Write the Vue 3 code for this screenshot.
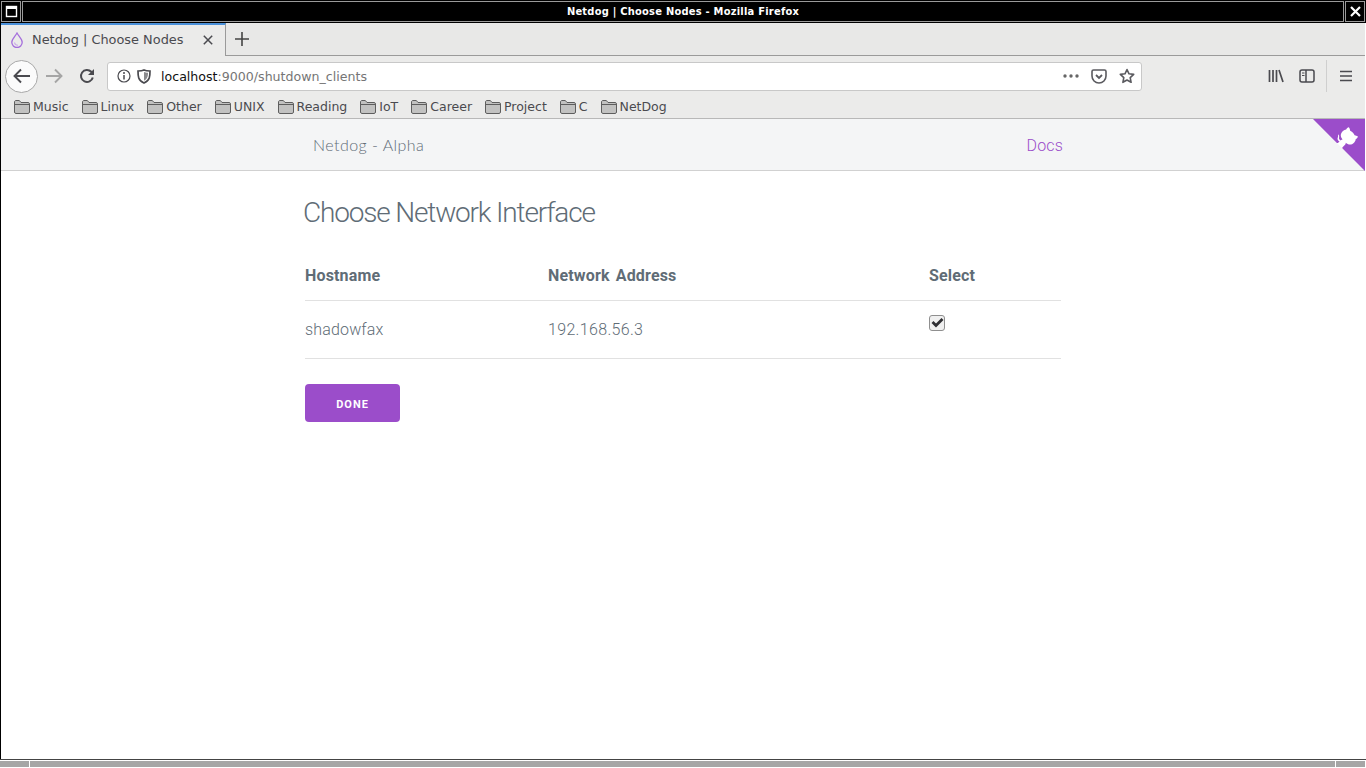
<template>
  <div class="window">
    <div class="titlebar">
      <div class="win-btn">
        <svg width="13" height="13" viewBox="0 0 13 13"><rect x="1.5" y="1.5" width="10" height="10" fill="none" stroke="#fff" stroke-width="1.4" /><rect x="1" y="1" width="11" height="3" fill="#fff" /></svg>
      </div>
      <div class="win-title">Netdog | Choose Nodes - Mozilla Firefox</div>
      <div class="win-btn">
        <svg width="13" height="13" viewBox="0 0 13 13"><path d="M2 2l9 9M11 2l-9 9" stroke="#fff" stroke-width="2.2" /></svg>
      </div>
    </div>

    <div class="browser">
      <div class="tabbar">
        <div class="tab">
          <svg class="tab-icon" width="14" height="16" viewBox="0 0 14 16">
            <path d="M7 1C5 4.500 1.800 7 1.800 10.300A5.200 5.200 0 0 0 12.200 10.300C12.200 7 9 4.500 7 1Z" fill="none" stroke="#a56fdc" stroke-width="1.300" />
            <path d="M4.500 10.500C4.800 12.300 6 13.300 8 13.300" fill="none" stroke="#c9a6ea" stroke-width="1.100" />
          </svg>
          <span class="tab-title">Netdog | Choose Nodes</span>
          <svg class="tab-close" width="10" height="10" viewBox="0 0 10 10"><path d="M.8.800l8.400 8.400M9.200.800L.8 9.200" stroke="#4a4a4f" stroke-width="1.500" /></svg>
        </div>
        <div class="tab-rest">
          <svg width="14" height="14" viewBox="0 0 14 14"><path d="M7 0v14M0 7h14" stroke="#444" stroke-width="1.600" /></svg>
        </div>
      </div>

      <div class="navbar">
        <div class="back">
          <svg width="18" height="16" viewBox="0 0 18 16"><path d="M8 1.500L1.500 8 8 14.500M2 8h15" fill="none" stroke="#4a4a4f" stroke-width="1.900" /></svg>
        </div>
        <svg class="fwd" width="18" height="16" viewBox="0 0 18 16"><path d="M10 1.500L16.500 8 10 14.500M16 8H1" fill="none" stroke="#a5a5a5" stroke-width="1.900" /></svg>
        <svg class="reload" width="16" height="16" viewBox="0 0 16 16"><path d="M13.800 9.500A6 6 0 1 1 12.300 3.800L14 5.500" fill="none" stroke="#4a4a4f" stroke-width="2" /><path d="M15 1v6H9z" fill="#4a4a4f" /></svg>
        <div class="urlbar">
          <svg class="info" width="14" height="14" viewBox="0 0 14 14"><circle cx="7" cy="7" r="6" fill="none" stroke="#4a4a4f" stroke-width="1.200" /><path d="M7 6v4.500" stroke="#4a4a4f" stroke-width="1.500" /><circle cx="7" cy="3.900" r="1" fill="#4a4a4f" /></svg>
          <svg class="shield" width="14" height="15" viewBox="0 0 14 15"><path d="M7 1c2 1 4 1 6 1 0 5 0 9.500-6 12C1 11.500 1 7 1 2c2 0 4 0 6-1Z" fill="none" stroke="#4a4a4f" stroke-width="1.700" /><path d="M7 3c1 .5 2.500.8 4 .8 0 3.500-.5 6-4 8Z" fill="#8a8a8d" /></svg>
          <span class="url"><span class="url-host">localhost</span>:9000/shutdown_clients</span>
          <svg class="dots" width="16" height="4" viewBox="0 0 16 4"><circle cx="2" cy="2" r="1.700" fill="#666" /><circle cx="8" cy="2" r="1.700" fill="#666" /><circle cx="14" cy="2" r="1.700" fill="#666" /></svg>
          <svg class="pocket" width="16" height="15" viewBox="0 0 16 15"><path d="M2.500 1h11c.8 0 1.500.7 1.500 1.500V7a7 7 0 0 1-14 0V2.500C1 1.700 1.700 1 2.500 1Z" fill="none" stroke="#5a5a5f" stroke-width="1.600" /><path d="M5 6l3 3 3-3" fill="none" stroke="#5a5a5f" stroke-width="1.800" /></svg>
          <svg class="star" width="16" height="16" viewBox="0 0 16 16"><path d="M8 1.500l2 4.300 4.700.6-3.500 3.200.9 4.700L8 12l-4.100 2.300.9-4.700L1.300 6.400 6 5.800Z" fill="none" stroke="#5a5a5f" stroke-width="1.600" stroke-linejoin="round" /></svg>
        </div>
        <svg class="library" width="16" height="14" viewBox="0 0 16 14"><path d="M1.500 1v12M5 1v12M8.500 1v12M11 1l4 12" fill="none" stroke="#4a4a4f" stroke-width="1.700" /></svg>
        <svg class="sidebar-icon" width="16" height="14" viewBox="0 0 16 14"><rect x="1" y="1" width="14" height="12" rx="2" fill="none" stroke="#4a4a4f" stroke-width="1.500" /><path d="M7 1v12" stroke="#4a4a4f" stroke-width="1.500" /><path d="M3 4h2.500M3 6.500h2.500" stroke="#4a4a4f" stroke-width="1.200" /></svg>
        <div class="divider"></div>
        <svg class="menu" width="12" height="12" viewBox="0 0 12 12"><path d="M0 1.500h12M0 6h12M0 10.500h12" stroke="#4a4a4f" stroke-width="1.500" /></svg>
      </div>

      <div class="bookmarks">
        <div v-for="b in bookmarks" :key="b" class="bookmark">
          <svg width="16" height="14" viewBox="0 0 16 14"><path d="M.5 12V2c0-.8.6-1.500 1.400-1.500h3.400L7 2.500h7.100c.8 0 1.400.6 1.400 1.400V12c0 .8-.6 1.500-1.400 1.500H1.900C1.100 13.500.5 12.800.5 12Z" fill="#c2c2c1" stroke="#5e5e5e" /><path d="M1 4.500h14" stroke="#5e5e5e" /></svg>
          <span>{{ b }}</span>
        </div>
      </div>

      <div class="page">
        <header class="site-nav">
          <div class="site-nav-inner">
            <span class="brand">Netdog - Alpha</span>
            <a class="docs">Docs</a>
          </div>
          <svg class="corner" width="52" height="52" viewBox="0 0 250 250">
            <path d="M0,0 L115,115 L130,115 L142,142 L250,250 L250,0 Z" fill="#9b4dca" />
            <path d="M128.300,109.000 C113.800,99.700 119.000,89.600 119.000,89.600 C122.000,82.700 120.500,78.600 120.500,78.600 C119.200,72.000 123.400,76.300 123.400,76.300 C127.300,80.900 125.500,87.300 125.500,87.300 C122.900,97.600 130.600,101.900 134.400,103.200" fill="#fff" />
            <path d="M115.000,115.000 C114.900,115.100 118.700,116.500 119.800,115.400 L133.700,101.600 C136.900,99.200 139.900,98.400 142.200,98.600 C133.800,88.000 127.500,74.400 143.800,58.000 C148.500,53.400 154.000,51.200 159.700,51.000 C160.300,49.400 163.200,43.600 171.400,40.100 C171.400,40.100 176.100,42.500 178.800,56.200 C183.100,58.600 187.200,61.800 190.900,65.400 C194.500,69.000 197.700,73.200 200.100,77.600 C213.800,80.200 216.300,84.900 216.300,84.900 C212.700,93.100 206.900,96.000 205.400,96.600 C205.100,102.400 203.000,107.800 198.300,112.500 C181.900,128.900 168.300,122.500 157.700,114.100 C157.900,116.900 156.700,120.900 152.700,124.900 L141.000,136.500 C139.800,137.700 141.600,141.900 141.800,141.800 Z" fill="#fff" />
          </svg>
        </header>

        <main class="content">
          <h3 class="heading">Choose Network Interface</h3>
          <table class="nodes">
            <thead>
              <tr>
                <th class="col-host">Hostname</th>
                <th class="col-addr">Network Address</th>
                <th>Select</th>
              </tr>
            </thead>
            <tbody>
              <tr v-for="n in nodes" :key="n.host">
                <td>{{ n.host }}</td>
                <td class="addr">{{ n.addr }}</td>
                <td class="select-cell">
                  <span class="check">
                    <svg width="13" height="11" viewBox="0 0 13 11"><path d="M1.500 5l3.500 3.500 6.500-6.500" fill="none" stroke="#2f2f33" stroke-width="2.800" /></svg>
                  </span>
                </td>
              </tr>
            </tbody>
          </table>
          <button class="done">Done</button>
        </main>
      </div>
    </div>

    <div class="hscroll">
      <div class="hscroll-seg hscroll-end"></div>
      <div class="hscroll-seg hscroll-track"></div>
      <div class="hscroll-seg hscroll-end"></div>
    </div>
  </div>
</template>

<script setup>
const bookmarks = ['Music', 'Linux', 'Other', 'UNIX', 'Reading', 'IoT', 'Career', 'Project', 'C', 'NetDog']

const nodes = [
  { host: 'shadowfax', addr: '192.168.56.3' }
]
</script>

<style>
html, body {
  margin: 0;
  overflow: hidden;
  background: #fff;
}
</style>

<style scoped>
.window {
  width: 1366px;
  height: 768px;
  display: flex;
  flex-direction: column;
  overflow: hidden;
  background: #fff;
}

.titlebar {
  height: 23px;
  flex: none;
  display: flex;
  background: #000;
  box-sizing: border-box;
  padding: 1px;
  gap: 1px;
}

.win-btn {
  width: 20px;
  flex: none;
  box-sizing: border-box;
  border: 1px solid #9a9a9a;
  display: flex;
  align-items: center;
  justify-content: center;
}

.win-title {
  flex: 1;
  box-sizing: border-box;
  border: 1px solid #9a9a9a;
  color: #fff;
  text-align: center;
  font: bold 11px/19px "DejaVu Sans Condensed", "DejaVu Sans", sans-serif;
  font-stretch: condensed;
  letter-spacing: 0.24px;
}

.browser {
  flex: 1;
  min-height: 0;
  display: flex;
  flex-direction: column;
  border-left: 1px solid #000;
  border-right: 1px solid #fff;
}

.tabbar {
  height: 33px;
  flex: none;
  display: flex;
  background: #e8e8e7;
}

.tab {
  width: 225px;
  box-sizing: border-box;
  border-top: 2px solid #4a90d9;
  border-right: 1px solid #9a9a9a;
  display: flex;
  align-items: center;
  background: #ebebea;
  font: 12.9px "DejaVu Sans", sans-serif;
  color: #4a4a4f;
  padding: 0 0 2px 9px;
}

.tab-icon {
  flex: none;
}

.tab-title {
  margin-left: 8px;
  white-space: nowrap;
}

.tab-close {
  margin-left: auto;
  margin-right: 12px;
}

.tab-rest {
  flex: 1;
  display: flex;
  align-items: center;
  padding-left: 9px;
  border-bottom: 1px solid #9a9a9a;
}

.navbar {
  height: 37px;
  flex: none;
  box-sizing: border-box;
  display: flex;
  align-items: center;
  background: #ebebea;
  padding: 3px 0 0 4px;
}

.back {
  width: 33px;
  height: 33px;
  flex: none;
  box-sizing: border-box;
  border: 1px solid #a8a8a8;
  border-radius: 50%;
  background: #fbfbfb;
  display: flex;
  align-items: center;
  justify-content: center;
}

.fwd {
  margin-left: 7px;
  flex: none;
}

.reload {
  margin-left: 16px;
  flex: none;
}

.urlbar {
  width: 1035px;
  height: 29px;
  flex: none;
  margin-left: 12px;
  box-sizing: border-box;
  border: 1px solid #c8c8c8;
  border-radius: 3px;
  background: #fff;
  display: flex;
  align-items: center;
  padding-left: 9px;
  font: 12.6px "DejaVu Sans", sans-serif;
  color: #757575;
}

.shield {
  margin-left: 6px;
}

.url {
  margin-left: 10px;
  flex: 1;
  white-space: nowrap;
}

.url-host {
  color: #111;
}

.pocket {
  margin-left: 12px;
}

.star {
  margin-left: 12px;
  margin-right: 6px;
}

.library {
  margin-left: 126px;
  flex: none;
}

.sidebar-icon {
  margin-left: 15px;
  flex: none;
}

.divider {
  width: 1px;
  height: 32px;
  margin-left: 11px;
  background: #cfcfcf;
  flex: none;
}

.menu {
  margin-left: 13px;
  flex: none;
}

.bookmarks {
  height: 26px;
  flex: none;
  display: flex;
  align-items: center;
  gap: 13px;
  padding: 2px 0 0 13px;
  box-sizing: border-box;
  background: #ebebea;
  border-bottom: 1px solid #b8b8b8;
  font: 12.5px "DejaVu Sans", sans-serif;
  color: #4a4a4f;
}

.bookmark {
  display: flex;
  align-items: center;
  gap: 3px;
}

.page {
  flex: 1;
  min-height: 0;
  background: #fff;
  color: #606c76;
  font-family: Roboto, sans-serif;
  font-weight: 300;
  font-size: 16px;
  letter-spacing: 0.16px;
}

.site-nav {
  height: 52px;
  box-sizing: border-box;
  position: relative;
  background: #f4f5f6;
  border-bottom: 1px solid #d1d1d1;
}

.site-nav-inner {
  width: 750px;
  height: 100%;
  margin-left: 312px;
  display: flex;
  align-items: center;
  justify-content: space-between;
}

.brand {
  font-family: Lato, sans-serif;
  font-size: 16px;
  font-weight: 300;
  letter-spacing: 0.45px;
  color: #606c76;
}

.docs {
  margin-top: 2px;
  color: #9b4dca;
  font-weight: 300;
}

.corner {
  position: absolute;
  top: 0;
  right: 0;
}

.content {
  width: 756px;
  margin-left: 304px;
}

.heading {
  margin: 25px 0 0 -2px;
  font-size: 28px;
  line-height: 34px;
  font-weight: 300;
  letter-spacing: -1.17px;
}

.nodes {
  width: 756px;
  margin-top: 20px;
  border-collapse: collapse;
  border-spacing: 0;
  table-layout: fixed;
}

.nodes th,
.nodes td {
  box-sizing: border-box;
  text-align: left;
  padding: 0;
  border-bottom: 1px solid #e1e1e1;
}

.nodes th {
  height: 50px;
  padding-top: 2px;
  font-weight: 700;
  word-spacing: 2px;
}

.nodes td {
  height: 58px;
}

.nodes td.addr {
  letter-spacing: 0.33px;
}

.col-host {
  width: 243px;
}

.col-addr {
  width: 381px;
}

.nodes td.select-cell {
  vertical-align: top;
  padding-top: 14px;
}

.check {
  width: 16px;
  height: 16px;
  display: flex;
  align-items: center;
  justify-content: center;
  box-sizing: border-box;
  border: 1px solid #8f8f8f;
  border-radius: 3px;
  background: #f0f0f0;
}

.done {
  display: block;
  width: 95px;
  height: 38px;
  margin-top: 25px;
  padding: 3px 0 0;
  border: 0;
  border-radius: 4px;
  background: #9b4dca;
  color: #fff;
  font-family: Roboto, sans-serif;
  font-size: 11px;
  font-weight: 700;
  letter-spacing: 1px;
  text-transform: uppercase;
}

.hscroll {
  height: 9px;
  flex: none;
  display: flex;
  gap: 1px;
  box-sizing: border-box;
  padding: 0 1px 1px 0;
  background: #fff;
  border-top: 1px solid #444;
}

.hscroll-seg {
  margin-top: 1px;
  background: #a6a6a6;
}

.hscroll-end {
  width: 29px;
  flex: none;
}

.hscroll-track {
  flex: 1;
}
</style>
